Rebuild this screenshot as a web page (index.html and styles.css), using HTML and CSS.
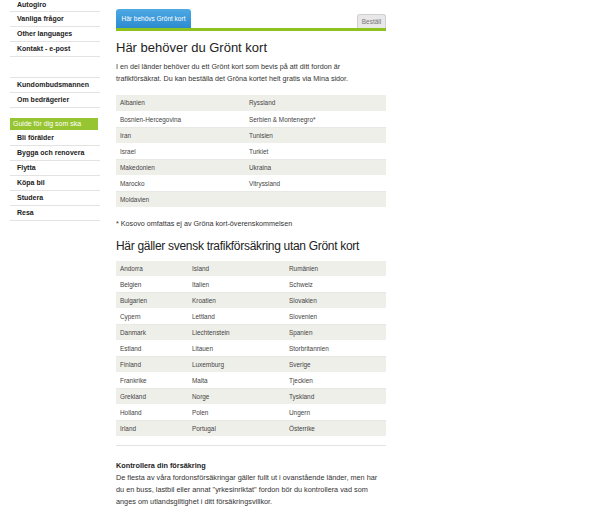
FILE: index.html
```html
<!DOCTYPE html>
<html lang="sv">
<head>
<meta charset="utf-8">
<title>Grönt kort</title>
<link rel="stylesheet" href="styles.css">
</head>
<body>
<div class="page">
  <aside class="sidebar">
    <ul class="nav nav-top">
      <li class="first">Autogiro</li>
      <li>Vanliga frågor</li>
      <li>Other languages</li>
      <li>Kontakt - e-post</li>
    </ul>
    <ul class="nav nav-mid">
      <li>Kundombudsmannen</li>
      <li>Om bedrägerier</li>
    </ul>
    <div class="guide">Guide för dig som ska</div>
    <ul class="nav nav-guide">
      <li>Bli förälder</li>
      <li>Bygga och renovera</li>
      <li>Flytta</li>
      <li>Köpa bil</li>
      <li>Studera</li>
      <li>Resa</li>
    </ul>
  </aside>
  <main class="main">
    <div class="tabs">
      <div class="tab tab-active">Här behövs Grönt kort</div>
      <div class="tab tab-order">Beställ</div>
    </div>
    <h1 class="h1">Här behöver du Grönt kort</h1>
    <p class="text">I en del länder behöver du ett Grönt kort som bevis på att ditt fordon är trafikförsäkrat. Du kan beställa det Gröna kortet helt gratis via Mina sidor.</p>
    <table class="countries two">
      <tr><td>Albanien</td><td>Ryssland</td></tr>
      <tr><td>Bosnien-Hercegovina</td><td>Serbien &amp; Montenegro*</td></tr>
      <tr><td>Iran</td><td>Tunisien</td></tr>
      <tr><td>Israel</td><td>Turkiet</td></tr>
      <tr><td>Makedonien</td><td>Ukraina</td></tr>
      <tr><td>Marocko</td><td>Vitryssland</td></tr>
      <tr><td>Moldavien</td><td></td></tr>
    </table>
    <p class="note">* Kosovo omfattas ej av Gröna kort-överenskommelsen</p>
    <h2 class="h1 h2">Här gäller svensk trafikförsäkring utan Grönt kort</h2>
    <table class="countries three">
      <tr><td>Andorra</td><td>Island</td><td>Rumänien</td></tr>
      <tr><td>Belgien</td><td>Italien</td><td>Schweiz</td></tr>
      <tr><td>Bulgarien</td><td>Kroatien</td><td>Slovakien</td></tr>
      <tr><td>Cypern</td><td>Lettland</td><td>Slovenien</td></tr>
      <tr><td>Danmark</td><td>Liechtenstein</td><td>Spanien</td></tr>
      <tr><td>Estland</td><td>Litauen</td><td>Storbritannien</td></tr>
      <tr><td>Finland</td><td>Luxemburg</td><td>Sverige</td></tr>
      <tr><td>Frankrike</td><td>Malta</td><td>Tjeckien</td></tr>
      <tr><td>Grekland</td><td>Norge</td><td>Tyskland</td></tr>
      <tr><td>Holland</td><td>Polen</td><td>Ungern</td></tr>
      <tr><td>Irland</td><td>Portugal</td><td>Österrike</td></tr>
    </table>
    <div class="divider"></div>
    <p class="text check"><strong>Kontrollera din försäkring</strong><br>De flesta av våra fordonsförsäkringar gäller fullt ut i ovanstående länder, men har du en buss, lastbil eller annat "yrkesinriktat" fordon bör du kontrollera vad som anges om utlandsgiltighet i ditt försäkringsvillkor.</p>
  </main>
</div>
</body>
</html>
```
FILE: styles.css
```css
* { box-sizing: border-box; }
html, body { margin: 0; padding: 0; background: #fff; }
body {
  font-family: "Liberation Sans", Arial, sans-serif;
  color: #333;
  width: 600px;
  height: 507px;
  overflow: hidden;
}
.page {
  display: flex;
  align-items: flex-start;
  padding-left: 10px;
}
.sidebar {
  width: 90px;
  flex: none;
}
.nav {
  list-style: none;
  margin: 0;
  padding: 0;
}
.nav li {
  height: 15px;
  line-height: 14px;
  border-bottom: 1px solid #e3e3e3;
  font-size: 7px;
  font-weight: bold;
  color: #222;
  padding-left: 7px;
}
.nav-top li.first { height: 12px; line-height: 9px; }
.nav-mid { margin-top: 20px; border-top: 1px solid #e3e3e3; }
.guide {
  margin-top: 10px;
  width: 88px;
  height: 12px;
  line-height: 12px;
  background: #97c531;
  color: #fff;
  font-size: 7px;
  padding-left: 3px;
}
.nav-guide li { padding-left: 7px; }
.nav-guide li:first-child { height: 16px; line-height: 15px; }

.main {
  margin-left: 16px;
  width: 270px;
  flex: none;
}
.tabs {
  display: flex;
  justify-content: space-between;
  align-items: flex-end;
  padding-top: 9px;
  border-bottom: 3px solid #8dc21f;
}
.tab {
  font-size: 6.5px;
  border-radius: 3px 3px 0 0;
}
.tab-active {
  width: 75px;
  height: 19px;
  line-height: 19px;
  text-align: center;
  color: #fff;
  background: linear-gradient(#4ea9e4, #2c8bd0);
}
.tab-order {
  width: 29px;
  height: 14px;
  line-height: 13px;
  text-align: center;
  color: #777;
  background: #e8e8e8;
  border: 1px solid #cfcfcf;
  border-bottom: none;
}
.h1 {
  margin: 9px 0 0;
  font-size: 13px;
  line-height: 16px;
  font-weight: normal;
  color: #222;
}
.h2 {
  margin-top: 8px;
  font-size: 12px;
  letter-spacing: -0.3px;
  white-space: nowrap;
}
.text {
  margin: 5px 0 0;
  font-size: 7.2px;
  line-height: 12px;
  color: #333;
}
.countries {
  width: 100%;
  border-collapse: collapse;
  margin-top: 10px;
  font-size: 6.4px;
  color: #444;
}
.countries td {
  height: 16px;
  padding: 0 0 0 4px;
  border-bottom: 1px solid #e8e8e4;
  vertical-align: middle;
}
.countries tr:nth-child(odd) td { background: #efefea; border-bottom-color: #fff; }
.two td:first-child { width: 129px; }
.three { margin-top: 7px; }
.three td:nth-child(1) { width: 72px; }
.three td:nth-child(2) { width: 97px; }
.note {
  margin: 10px 0 0;
  font-size: 7.2px;
  line-height: 12px;
}
.divider {
  margin-top: 8px;
  height: 1px;
  background: #e3e3e3;
}
.check {
  margin-top: 14px;
  font-size: 7.3px;
  padding-right: 4px;
}
.check strong { color: #222; }
```
